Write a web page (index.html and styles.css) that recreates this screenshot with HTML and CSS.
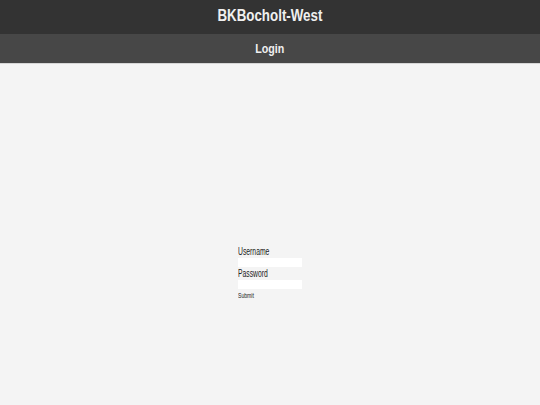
FILE: index.html
```html
<!DOCTYPE html>
<html>
<head>
<meta charset="utf-8">
<link rel="stylesheet" href="styles.css">
</head>
<body>
<div class="page">
  <header class="top"><span class="title">BKBocholt-West</span></header>
  <div class="sub"><span class="subtitle">Login</span></div>
  <main class="content">
    <form class="login">
      <label class="lbl"><span class="narrow">Username</span></label>
      <input class="field" type="text">
      <label class="lbl"><span class="narrow">Password</span></label>
      <input class="field" type="password">
      <button class="submit" type="button"><span class="narrow-s">Submit</span></button>
    </form>
  </main>
</div>
</body>
</html>
```
FILE: styles.css
```css
html, body {
  margin: 0;
  padding: 0;
  height: 100%;
}
body {
  background: #f4f4f4;
  font-family: "Liberation Sans", Arial, sans-serif;
}
.page {
  display: flex;
  flex-direction: column;
  height: 100%;
}
.top {
  height: 34px;
  box-sizing: border-box;
  padding-bottom: 2px;
  background: #333333;
  color: #f0f0f0;
  font-weight: bold;
  font-size: 17px;
  display: flex;
  align-items: center;
  justify-content: center;
}
.title {
  display: inline-block;
  transform: scaleX(0.785);
}
.sub {
  height: 29px;
  background: #474747;
  color: #f0f0f0;
  font-weight: bold;
  font-size: 13px;
  display: flex;
  align-items: center;
  justify-content: center;
  border-bottom: 1px solid #d6d6d6;
}
.subtitle {
  display: inline-block;
  transform: scaleX(0.82);
}
.content {
  flex: 1;
  display: flex;
  justify-content: center;
  padding-top: 181px;
}
.login {
  display: flex;
  flex-direction: column;
  align-items: flex-start;
  width: 64px;
}
.narrow {
  display: inline-block;
  transform: scaleX(0.68);
  transform-origin: left center;
}
.narrow-s {
  display: inline-block;
  transform: scaleX(0.73);
  transform-origin: left center;
}
.lbl {
  font-size: 10px;
  color: #222222;
  line-height: 13px;
  height: 13px;
}
.field {
  width: 64px;
  height: 9px;
  border: none;
  padding: 0;
  margin: 0;
  background: #ffffff;
  box-sizing: border-box;
}
.submit {
  border: none;
  background: none;
  padding: 0;
  margin-top: 2px;
  font-family: inherit;
  font-size: 7px;
  line-height: 9px;
  color: #222222;
}
```
